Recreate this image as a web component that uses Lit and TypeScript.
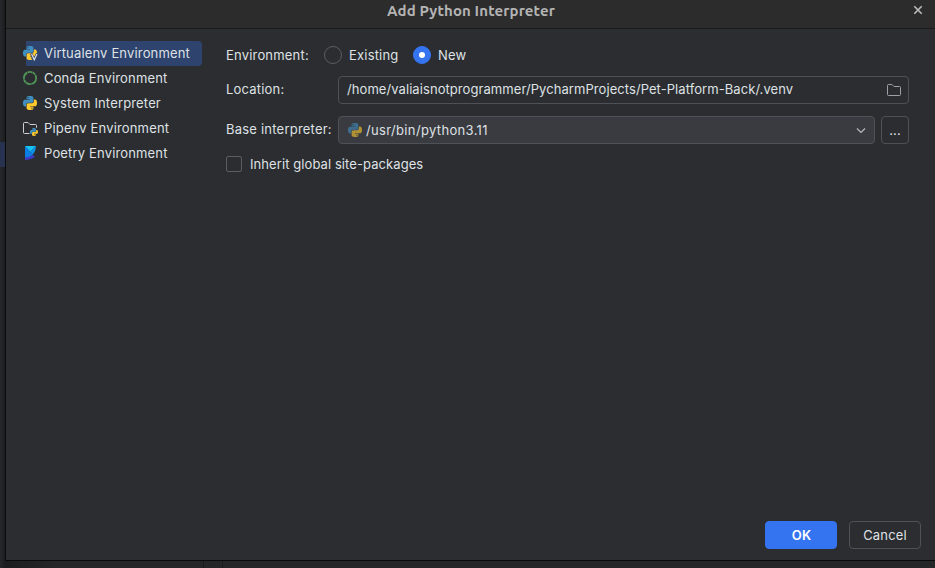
import { LitElement, html, svg, css } from "lit";
import { customElement, state } from "lit/decorators.js";

const SNAKE =
  "M14.25.18l.9.2.73.26.59.3.45.32.34.34.25.34.16.33.1.3.04.26.02.2-.01.13V8.5l-.05.63-.13.55-.21.46-.26.38-.3.31-.33.25-.35.19-.35.14-.33.1-.3.07-.26.04-.21.02H8.77l-.69.05-.59.14-.5.22-.41.27-.33.32-.27.35-.2.36-.15.37-.1.35-.07.32-.04.27-.02.21v3.06H3.17l-.21-.03-.28-.07-.32-.12-.35-.18-.36-.26-.36-.36-.35-.46-.32-.59-.28-.73-.21-.88-.14-1.05-.05-1.23.06-1.22.16-1.04.24-.87.32-.71.36-.57.4-.44.42-.33.42-.24.4-.16.36-.1.32-.05.24-.01h.16l.06.01h8.16v-.83H6.18l-.01-2.75-.02-.37.05-.34.11-.31.17-.28.25-.26.31-.23.38-.2.44-.18.51-.15.58-.12.64-.1.71-.06.77-.04.84-.02 1.27.05zm-6.3 1.98l-.23.33-.08.41.08.41.23.34.33.22.41.09.41-.09.33-.22.23-.34.08-.41-.08-.41-.23-.33-.33-.22-.41-.09-.41.09z";

const snakes = (transform: string) => svg`
  <g transform=${transform}>
    <path fill="#3f8fc0" d=${SNAKE}></path>
    <path fill="#fdc92f" transform="rotate(180 12 12)" d=${SNAKE}></path>
  </g>`;

const icon = (body: unknown) =>
  html`<svg class="icon" width="16" height="16" viewBox="0 0 16 16" fill="none">${body}</svg>`;

const pythonIcon = icon(snakes("translate(1 1) scale(.583)"));
const folderPath =
  "M1.5 3.5a1 1 0 0 1 1-1H6l2 2h5.500a1 1 0 0 1 1 1v7a1 1 0 0 1-1 1h-11a1 1 0 0 1-1-1z";

const kinds = [
  {
    label: "Virtualenv Environment",
    icon: icon(svg`${snakes("translate(1 1) scale(.583)")}
      <path d="M9.200 8.500l3 7 3-7" stroke="#2e436e" stroke-width="2.600"></path>
      <path d="M9.600 9l2.700 5.800 2.700-5.800" stroke="#d5d9e0" stroke-width="1.300"></path>`),
  },
  {
    label: "Conda Environment",
    icon: icon(svg`<circle cx="8" cy="8" r="6.100" stroke="#4f9458" stroke-width="1.800"
      stroke-dasharray="8 .4 5 .3 3 .4"></circle>`),
  },
  { label: "System Interpreter", icon: pythonIcon },
  {
    label: "Pipenv Environment",
    icon: icon(svg`<path d="M7.500 13.500h-5a1 1 0 0 1-1-1v-9a1 1 0 0 1 1-1H6l2 2h5.500a1 1 0 0 1 1 1v2.200"
      stroke="#ced0d6"></path>${snakes("translate(8 8) scale(.33)")}`),
  },
  {
    label: "Poetry Environment",
    icon: icon(svg`<path fill="#3f3cc4" d="M3 10h7.500l2.500 1.600C10.800 13.800 7.200 15 3 15z"></path>
      <path fill="#0b7de6" d="M3 1l7.800 8.500C8.800 11.400 6.200 12.300 3 12.300z"></path>
      <path fill="#16c1f3" d="M3 1h11l-5.700 5.800z"></path>
      <path fill="#0c93ea" d="M8.300 6.800L14 1c0 3.200-1.100 6.100-3.200 8.500z"></path>`),
  },
];

@customElement("app-root")
export class AppRoot extends LitElement {
  @state() private selected = 0;
  @state() private mode = "New";

  static styles = css`
    :host {
      display: block;
      position: relative;
      width: 935px;
      height: 568px;
      overflow: hidden;
      background: linear-gradient(90deg, #27282b, #1c1d1f 5px, #252628 60px);
      color: #dfe1e5;
      font: 13px/16px Inter, "Noto Sans", sans-serif;
      letter-spacing: 0.16px;
    }
    * { box-sizing: border-box; }
    .peek { position: absolute; background: #263250; left: 0; top: 142px; width: 5px; height: 25px; }
    .tick { position: absolute; top: 561px; width: 1px; height: 7px; background: #191a1b; }
    .tick.a { left: 203px; }
    .tick.b { left: 222px; }
    .dialog {
      position: relative;
      margin-left: 5px;
      width: 940px;
      height: 561px;
      border: 1px solid #090a0b;
      border-top: 0;
      background: #2b2d30;
      display: flex;
      flex-direction: column;
      padding-right: 10px;
    }
    .bar {
      height: 29px;
      flex: none;
      margin-right: -10px;
      background: #2c2c2c;
      border-bottom: 1px solid #1b1b1c;
      display: flex;
      padding-right: 20px;
    }
    .title {
      flex: 1;
      text-align: center;
      padding: 1px 0 0 24px;
      font: bold 15px/20px Ubuntu, "Noto Sans", sans-serif;
      letter-spacing: 0.12px;
      color: #b4b4b4;
    }
    .close { margin-top: 5px; flex: none; }
    .main { flex: 1; display: flex; }
    .side { width: 196px; padding: 12px 0 0 16px; }
    .kind {
      display: flex; height: 25px; padding-bottom: 1px; align-items: center; gap: 6px; white-space: nowrap;
    }
    .kind.on { background: linear-gradient(#2e436e, #2e436e) 4px 0 no-repeat; border-radius: 4px; }
    .icon { flex: none; display: block; }
    .form { width: 683px; margin-left: 24px; padding-top: 17px; }
    .line { display: flex; align-items: center; }
    .label { width: 112px; flex: none; white-space: nowrap; letter-spacing: 0.19px; }
    .env { height: 18px; letter-spacing: 0.19px; }
    .env .label { width: 98px; }
    .radio {
      width: 18px; height: 18px; border-radius: 50%; border: 1px solid #5a5d63;
      margin-right: 7px; display: grid; place-items: center;
    }
    .radio.on { background: #3574f0; border-color: #3574f0; }
    .radio.on::after { content: ""; width: 6px; height: 6px; border-radius: 50%; background: #fff; }
    .opt { display: flex; align-items: center; width: 89px; }
    .box {
      height: 28px; flex: 1; border: 1px solid #4e5157; border-radius: 4px;
      display: flex; align-items: center; padding: 0 6px 0 8px;
    }
    .grow { flex: 1; white-space: nowrap; }
    .location { margin-top: 12px; }
    .location .label { padding-bottom: 2px; }
    .location .grow { letter-spacing: 0.07px; padding-bottom: 2px; }
    .base { margin-top: 12px; }
    .base .label { padding-bottom: 2px; letter-spacing: 0.22px; }
    .base .grow { letter-spacing: 0.34px; }
    .combo { background: #393b40; padding: 0 5px 0 8px; gap: 3px; }
    .dim { opacity: 0.6; }
    .more { flex: none; width: 28px; margin-left: 6px; padding: 0; justify-content: center; }
    .check { margin-top: 12px; gap: 8px; letter-spacing: 0.08px; }
    .tickbox { width: 16px; height: 16px; border: 1px solid #5a5d63; border-radius: 2px; }
    .foot { display: flex; justify-content: flex-end; gap: 12px; padding: 0 13px 11px 0; }
    .btn {
      width: 72px; height: 28px; border: 1px solid #4e5157; border-radius: 4px;
      display: grid; place-items: center;
    }
    .btn.ok { background: #3574f0; border-color: #3574f0; color: #fff; font-weight: 600; padding-left: 1px; }
  `;

  render() {
    return html`
      <div class="peek"></div><div class="tick a"></div><div class="tick b"></div>
      <div class="dialog">
        <div class="bar">
          <div class="title">Add Python Interpreter</div>
          <svg class="close" width="12" height="12" viewBox="0 0 12 12">
            <path d="M2.300 1.300l7.400 7.400M9.700 1.300l-7.400 7.400" stroke="#bdbdbd" stroke-width="1.600"></path>
          </svg>
        </div>
        <div class="main">
          <div class="side">
            ${kinds.map(
              (k, i) => html`<div class="kind ${i === this.selected ? "on" : ""}"
                @click=${() => (this.selected = i)}>${k.icon}<span>${k.label}</span></div>`
            )}
          </div>
          <div class="form">
            <div class="line env">
              <span class="label">Environment:</span>
              ${["Existing", "New"].map(
                (m) => html`<span class="opt" @click=${() => (this.mode = m)}>
                  <span class="radio ${m === this.mode ? "on" : ""}"></span>${m}</span>`
              )}
            </div>
            <div class="line location">
              <span class="label">Location:</span>
              <div class="box">
                <span class="grow">/home/valiaisnotprogrammer/PycharmProjects/Pet-Platform-Back/.venv</span>
                ${icon(svg`<path d=${folderPath} stroke="#9da0a8"></path>`)}
              </div>
            </div>
            <div class="line base">
              <span class="label">Base interpreter:</span>
              <div class="box combo">
                <span class="dim">${pythonIcon}</span>
                <span class="grow">/usr/bin/python3.11</span>
                ${icon(svg`<path d="M4 6.500l4 4 4-4" stroke="#b4b8bf" stroke-width="1.200"></path>`)}
              </div>
              <div class="box more">...</div>
            </div>
            <div class="line check"><span class="tickbox"></span>Inherit global site-packages</div>
          </div>
        </div>
        <div class="foot">
          <div class="btn ok">OK</div>
          <div class="btn">Cancel</div>
        </div>
      </div>
    `;
  }
}
